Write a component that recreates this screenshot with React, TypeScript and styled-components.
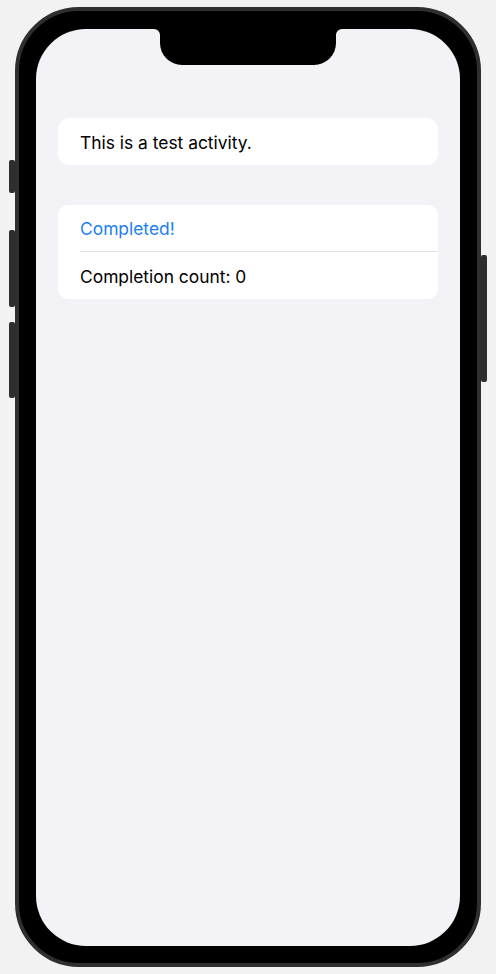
import React from "react";
import styled, { createGlobalStyle } from "styled-components";

const Global = createGlobalStyle`
  html, body { margin: 0; padding: 0; background: #f2f2f2; }
  body { font-family: Inter, "Noto Sans", "Liberation Sans", sans-serif; -webkit-font-smoothing: antialiased; }
`;

const Stage = styled.div`
  width: 496px;
  height: 974px;
  padding: 7px 0 0 15px;
  box-sizing: border-box;
`;

const Frame = styled.div`
  position: relative;
  width: 466px;
  height: 960px;
  box-sizing: border-box;
  border: 4px solid #2f2f2f;
  border-radius: 64px;
  background: #000;
  padding: 18px 17px 17px 17px;
`;

const SideButton = styled.div<{ $side: "left" | "right"; $top: number; $h: number }>`
  position: absolute;
  top: ${(p) => p.$top}px;
  height: ${(p) => p.$h}px;
  width: 6px;
  background: #2e2e2e;
  border-radius: 2px;
  ${(p) => (p.$side === "left" ? "left: -10px;" : "right: -10px;")}
`;

const Screen = styled.div`
  position: relative;
  height: 100%;
  background: #f2f2f7;
  border-radius: 50px;
  overflow: hidden;
  padding: 89px 22px 0 22px;
  box-sizing: border-box;
  display: flex;
  flex-direction: column;
  gap: 40px;
`;

const NotchWrap = styled.div`
  position: absolute;
  top: 0;
  left: 50%;
  transform: translateX(-50%);
  width: 188px;
  height: 36px;
  line-height: 0;
`;

const Card = styled.div`
  background: #fff;
  border-radius: 11px;
  display: flex;
  flex-direction: column;
`;

const Row = styled.div<{ $h: number; $accent?: boolean }>`
  height: ${(p) => p.$h}px;
  display: flex;
  align-items: center;
  padding-left: 22px;
  padding-top: 1px;
  box-sizing: border-box;
  font-size: 17.4px;
  color: ${(p) => (p.$accent ? "#1a7ff6" : "#000")};
`;

const Divider = styled.div`
  height: 1px;
  margin-left: 22px;
  background: #e0e0e5;
`;

const Notch = () => (
  <NotchWrap>
    <svg width="188" height="36" viewBox="0 0 188 36">
      <path
        d="M0 0 H188 A6 6 0 0 0 182 6 V14 A22 22 0 0 1 160 36 H28 A22 22 0 0 1 6 14 V6 A6 6 0 0 0 0 0 Z"
        fill="#000"
      />
    </svg>
  </NotchWrap>
);

export default function App() {
  return (
    <>
      <Global />
      <Stage>
        <Frame>
          <SideButton $side="left" $top={149} $h={33} />
          <SideButton $side="left" $top={219} $h={77} />
          <SideButton $side="left" $top={311} $h={76} />
          <SideButton $side="right" $top={244} $h={127} />
          <Screen>
            <Notch />
            <Card>
              <Row $h={47}>This is a test activity.</Row>
            </Card>
            <Card>
              <Row $h={46} $accent>Completed!</Row>
              <Divider />
              <Row $h={47}>Completion count: 0</Row>
            </Card>
          </Screen>
        </Frame>
      </Stage>
    </>
  );
}
